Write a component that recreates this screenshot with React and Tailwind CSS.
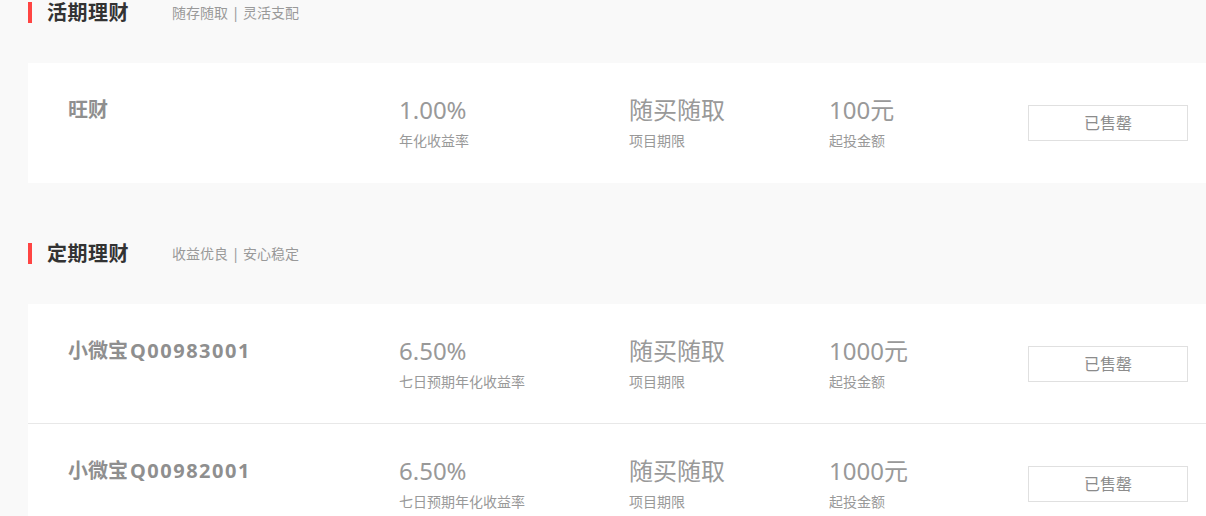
import React from "react";

const font = { fontFamily: '"Noto Sans", "Noto Sans CJK SC", sans-serif' };

function SectionHeader({ title, sub }) {
  return (
    <div className="flex items-center h-[21px]">
      <div className="w-[4px] h-[21px] bg-[#ff4543]" />
      <div className="ml-[15px] text-[20px] font-bold text-[#333333] leading-[21px] tracking-[0.5px]">{title}</div>
      <div className="ml-[43px] text-[14px] text-[#999999] leading-[21px]">{sub}</div>
    </div>
  );
}

function Row({ name, code, rate, rateLabel, amount, border }) {
  return (
    <div className={"flex h-[120px] bg-white pl-[40px] pr-[40px] " + (border ? "border-b border-[#e8e8e8]" : "")}>
      <div className="w-[331px] pt-[33px] text-[20px] font-bold text-[#8f8f8f] leading-[28px]">
        {name}
        {code && <span className="ml-[2px] tracking-[1.5px]">{code}</span>}
      </div>
      <div className="w-[230px] pt-[31px]">
        <div className="text-[24px] text-[#999999] leading-[32px]">{rate}</div>
        <div className="text-[14px] text-[#999999] leading-[18px] mt-[6px]">{rateLabel}</div>
      </div>
      <div className="w-[200px] pt-[31px]">
        <div className="text-[24px] text-[#999999] leading-[32px]">随买随取</div>
        <div className="text-[14px] text-[#999999] leading-[18px] mt-[6px]">项目期限</div>
      </div>
      <div className="w-[199px] pt-[31px]">
        <div className="text-[24px] text-[#999999] leading-[32px]">{amount}</div>
        <div className="text-[14px] text-[#999999] leading-[18px] mt-[6px]">起投金额</div>
      </div>
      <div className="flex items-center">
        <div className="w-[160px] h-[36px] border border-[#e0e0e0] flex items-center justify-center text-[16px] text-[#8c8c8c]">
          已售罄
        </div>
      </div>
    </div>
  );
}

export default function App() {
  return (
    <div className="w-[1206px] h-[516px] overflow-hidden bg-[#f9f9f9]" style={font}>
      <div className="ml-[28px] w-[1200px] pt-[2px]">
        <SectionHeader title="活期理财" sub="随存随取 | 灵活支配" />
        <div className="mt-[40px]">
          <Row name="旺财" rate="1.00%" rateLabel="年化收益率" amount="100元" />
        </div>
        <div className="mt-[60px]">
          <SectionHeader title="定期理财" sub="收益优良 | 安心稳定" />
        </div>
        <div className="mt-[40px]">
          <Row name="小微宝" code="Q00983001" rate="6.50%" rateLabel="七日预期年化收益率" amount="1000元" border />
          <Row name="小微宝" code="Q00982001" rate="6.50%" rateLabel="七日预期年化收益率" amount="1000元" />
        </div>
      </div>
    </div>
  );
}
